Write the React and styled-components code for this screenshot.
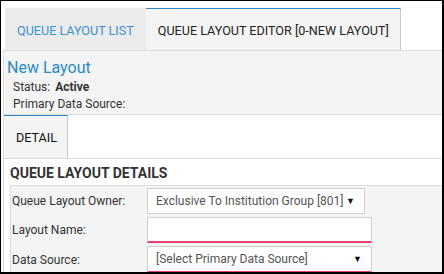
import React from "react";
import styled, { createGlobalStyle } from "styled-components";

const GlobalStyle = createGlobalStyle`
  html, body {
    margin: 0;
    padding: 0;
    background: #fff;
  }
  body {
    font-family: Roboto, "Liberation Sans", Arial, sans-serif;
    color: #333;
  }
`;

const blue = "#2a8ac8";
const tabBlue = "#3c93cf";
const pink = "#ec3f6e";
const line = "#dcdcdc";
const panelGrey = "#f4f4f4";

const Frame = styled.div`
  width: 444px;
  height: 274px;
  box-sizing: border-box;
  border: 1px solid #000;
  border-right-width: 2px;
  border-bottom-width: 2px;
  padding: 7px 0 0 2px;
  overflow: hidden;
  display: flex;
  flex-direction: column;
`;

const TabBar = styled.div`
  display: flex;
  margin-left: 2px;
  height: 42px;
  flex-shrink: 0;
`;

const Tab = styled.div`
  box-sizing: border-box;
  display: flex;
  align-items: center;
  padding: 2px 11px 0 12px;
  font-size: 12.6px;
  background: ${(p) => (p.$active ? panelGrey : "#ebebeb")};
  color: ${(p) => (p.$active ? "#222" : tabBlue)};
  border-top: 1px solid ${(p) => (p.$active ? blue : "transparent")};
  border-right: 1px solid ${(p) => (p.$active ? "#c8c8c8" : "transparent")};
`;

const Panel = styled.div`
  flex: 1;
  border-top: 1px solid ${line};
  border-left: 1px solid ${line};
  display: flex;
  flex-direction: column;
`;

const Header = styled.div`
  background: ${panelGrey};
  height: 64px;
  flex-shrink: 0;
  box-sizing: border-box;
  border-bottom: 1px solid ${line};
  padding: 7px 0 0 3px;
`;

const Title = styled.div`
  color: ${blue};
  font-size: 16px;
  line-height: 20px;
  margin-bottom: 1px;
`;

const Meta = styled.div`
  font-size: 12px;
  line-height: 17px;
  padding-left: 6px;
  color: #333;

  b {
    font-weight: 700;
    margin-left: 5px;
  }
`;

const SubTabs = styled.div`
  height: 44px;
  flex-shrink: 0;
  box-sizing: border-box;
  border-bottom: 1px solid ${line};
  display: flex;
`;

const SubTab = styled.div`
  width: 64px;
  box-sizing: border-box;
  background: ${panelGrey};
  border-top: 1px solid ${blue};
  border-right: 1px solid #c8c8c8;
  display: flex;
  align-items: center;
  padding: 0 0 0 12px;
  font-size: 12.6px;
  color: #111;
`;

const Section = styled.div`
  padding: 6px 0 0 6px;
`;

const SectionTitle = styled.div`
  font-size: 14px;
  font-weight: 700;
  color: #333;
  line-height: 17px;
  margin-bottom: 3px;
`;

const Form = styled.div`
  background: ${panelGrey};
  border-top: 1px solid ${line};
  border-left: 1px solid ${line};
  padding: 2px 0;
  display: flex;
  flex-direction: column;
  gap: 3px;
  height: 90px;
  box-sizing: border-box;
`;

const Row = styled.div`
  display: flex;
  align-items: center;
`;

const Label = styled.div`
  width: 135px;
  padding-left: 1px;
  font-size: 12px;
  color: #333;
`;

const Field = styled.div`
  box-sizing: border-box;
  width: ${(p) => p.$w}px;
  height: ${(p) => p.$h}px;
  background: #fff;
  border: 1px solid #cfcfcf;
  border-bottom: ${(p) => (p.$required ? `2px solid ${pink}` : "1px solid #cfcfcf")};
  display: flex;
  align-items: center;
  justify-content: space-between;
  padding: 0 9px 0 8px;
  font-size: 12px;
  color: #555;
`;

const Arrow = styled.span`
  font-size: 9px;
  color: #111;
`;

export default function App() {
  return (
    <>
      <GlobalStyle />
      <Frame>
        <TabBar>
          <Tab>QUEUE LAYOUT LIST</Tab>
          <Tab $active>QUEUE LAYOUT EDITOR [0-NEW LAYOUT]</Tab>
        </TabBar>
        <Panel>
          <Header>
            <Title>New Layout</Title>
            <Meta>
              Status:<b>Active</b>
            </Meta>
            <Meta>Primary Data Source:</Meta>
          </Header>
          <SubTabs>
            <SubTab>DETAIL</SubTab>
          </SubTabs>
          <Section>
            <SectionTitle>QUEUE LAYOUT DETAILS</SectionTitle>
            <Form>
              <Row>
                <Label>Queue Layout Owner:</Label>
                <Field $w={218} $h={26}>
                  Exclusive To Institution Group [801]
                  <Arrow>▼</Arrow>
                </Field>
              </Row>
              <Row>
                <Label>Layout Name:</Label>
                <Field $w={225} $h={26} $required />
              </Row>
              <Row>
                <Label>Data Source:</Label>
                <Field $w={225} $h={27} $required>
                  [Select Primary Data Source]
                  <Arrow>▼</Arrow>
                </Field>
              </Row>
            </Form>
          </Section>
        </Panel>
      </Frame>
    </>
  );
}
